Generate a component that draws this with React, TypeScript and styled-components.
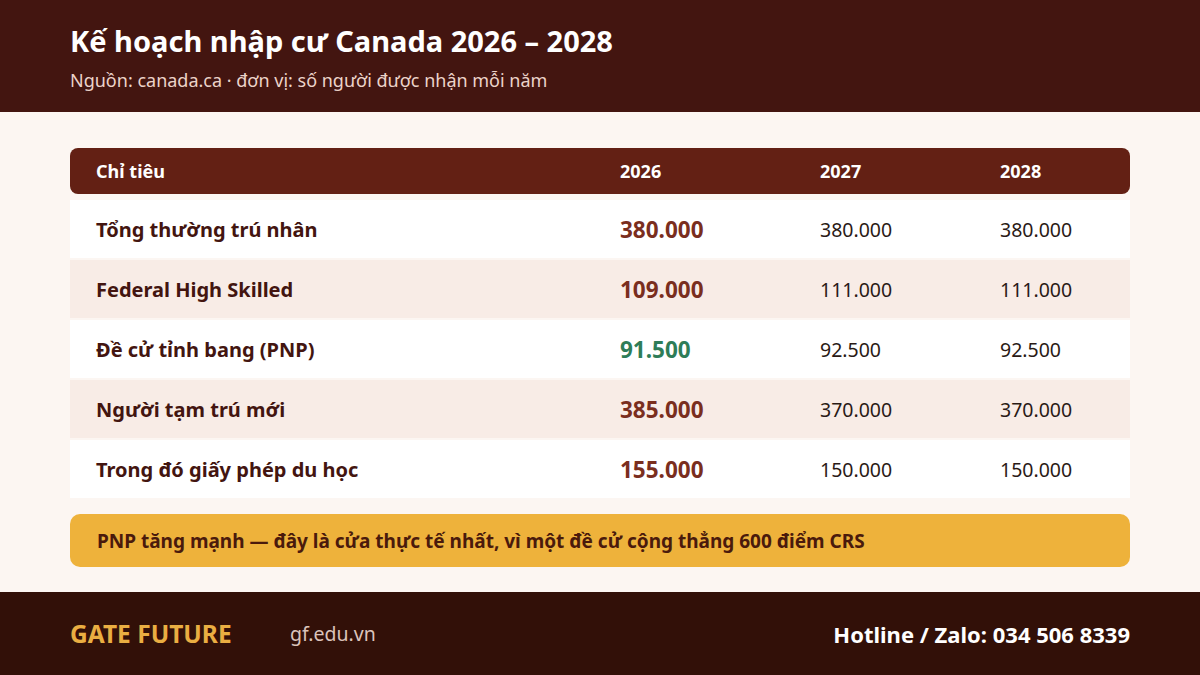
import React from "react";
import styled, { createGlobalStyle } from "styled-components";

const Global = createGlobalStyle`
  html, body { margin: 0; padding: 0; }
  body { font-family: "Noto Sans", "Open Sans", sans-serif; background: #fcf6f2; }
  * { box-sizing: border-box; }
`;

const Page = styled.div`
  width: 1200px;
  height: 675px;
  display: flex;
  flex-direction: column;
  background: #fcf6f2;
`;

const Header = styled.header`
  height: 112px;
  background: #431510;
  padding: 21px 70px 0;
  display: flex;
  flex-direction: column;
`;

const Title = styled.h1`
  margin: 0;
  color: #ffffff;
  font-size: 29px;
  font-weight: 700;
  line-height: 40px;
`;

const Subtitle = styled.div`
  margin-top: 7px;
  color: #ecd3c9;
  font-size: 18px;
  line-height: 24px;
`;

const Main = styled.main`
  flex: 1;
  padding: 36px 70px 0;
  display: flex;
  flex-direction: column;
`;

const Table = styled.div`
  display: flex;
  flex-direction: column;
  gap: 2px;
`;

const cols = "524px 200px 180px 156px";

const HeadRow = styled.div`
  display: grid;
  grid-template-columns: ${cols};
  height: 46px;
  align-items: center;
  background: #632014;
  border-radius: 8px;
  margin-bottom: 4px;
`;

const HeadCell = styled.div`
  padding-left: 26px;
  color: #ffffff;
  font-size: 18px;
  font-weight: 700;
`;

const Row = styled.div<{ $alt: boolean }>`
  display: grid;
  grid-template-columns: ${cols};
  height: 58px;
  align-items: center;
  background: ${(p) => (p.$alt ? "#f8ece6" : "#ffffff")};
`;

const Label = styled.div`
  padding-left: 26px;
  color: #431510;
  font-size: 20px;
  font-weight: 700;
`;

const Primary = styled.div<{ $green: boolean }>`
  padding-left: 26px;
  color: ${(p) => (p.$green ? "#2e7d58" : "#7a2e1e")};
  font-size: 22.5px;
  font-weight: 700;
`;

const Value = styled.div`
  padding-left: 26px;
  color: #2a1a16;
  font-size: 19.5px;
  font-weight: 400;
`;

const Callout = styled.div`
  margin-top: 16px;
  height: 53px;
  background: #eeb23b;
  border-radius: 10px;
  padding: 0 27px;
  display: flex;
  align-items: center;
  color: #4a1a0c;
  font-size: 19px;
  font-weight: 700;
`;

const Footer = styled.footer`
  height: 83px;
  background: #321008;
  padding: 0 70px;
  display: flex;
  align-items: center;
`;

const Brand = styled.div`
  color: #eaae42;
  font-size: 24.5px;
  font-weight: 700;
  width: 220px;
`;

const Site = styled.div`
  color: #dcc4bb;
  font-size: 19.5px;
`;

const Hotline = styled.div`
  margin-left: auto;
  color: #ffffff;
  font-size: 22px;
  font-weight: 700;
`;

const rows = [
  { label: "Tổng thường trú nhân", a: "380.000", b: "380.000", c: "380.000", green: false },
  { label: "Federal High Skilled", a: "109.000", b: "111.000", c: "111.000", green: false },
  { label: "Đề cử tỉnh bang (PNP)", a: "91.500", b: "92.500", c: "92.500", green: true },
  { label: "Người tạm trú mới", a: "385.000", b: "370.000", c: "370.000", green: false },
  { label: "Trong đó giấy phép du học", a: "155.000", b: "150.000", c: "150.000", green: false },
];

export default function App() {
  return (
    <Page>
      <Global />
      <Header>
        <Title>Kế hoạch nhập cư Canada 2026 – 2028</Title>
        <Subtitle>Nguồn: canada.ca · đơn vị: số người được nhận mỗi năm</Subtitle>
      </Header>
      <Main>
        <Table>
          <HeadRow>
            <HeadCell>Chỉ tiêu</HeadCell>
            <HeadCell>2026</HeadCell>
            <HeadCell>2027</HeadCell>
            <HeadCell>2028</HeadCell>
          </HeadRow>
          {rows.map((r, i) => (
            <Row key={r.label} $alt={i % 2 === 1}>
              <Label>{r.label}</Label>
              <Primary $green={r.green}>{r.a}</Primary>
              <Value>{r.b}</Value>
              <Value>{r.c}</Value>
            </Row>
          ))}
        </Table>
        <Callout>PNP tăng mạnh — đây là cửa thực tế nhất, vì một đề cử cộng thẳng 600 điểm CRS</Callout>
      </Main>
      <Footer>
        <Brand>GATE FUTURE</Brand>
        <Site>gf.edu.vn</Site>
        <Hotline>Hotline / Zalo: 034 506 8339</Hotline>
      </Footer>
    </Page>
  );
}
